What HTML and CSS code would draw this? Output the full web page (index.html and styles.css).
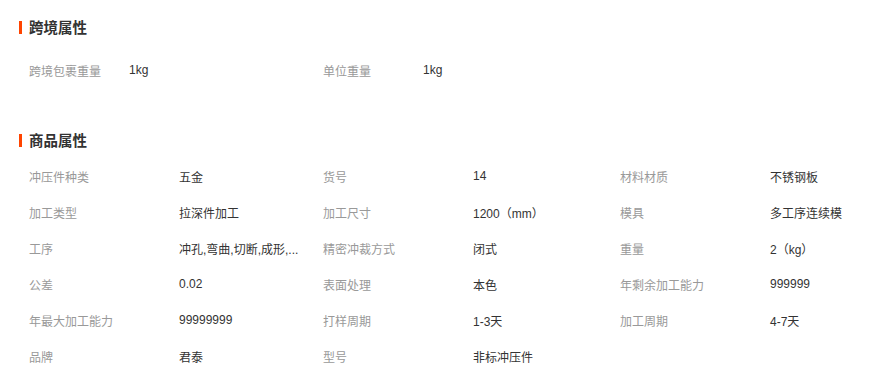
FILE: index.html
```html
<!DOCTYPE html>
<html lang="zh">
<head>
<meta charset="utf-8">
<link rel="stylesheet" href="styles.css">
</head>
<body>
<section class="sec sec-cross">
  <h2 class="title">跨境属性</h2>
  <div class="grid narrow">
    <div class="item"><span class="label">跨境包裹重量</span><span class="value">1kg</span></div>
    <div class="item"><span class="label">单位重量</span><span class="value">1kg</span></div>
  </div>
</section>
<section class="sec sec-goods">
  <h2 class="title">商品属性</h2>
  <div class="grid">
    <div class="item"><span class="label">冲压件种类</span><span class="value">五金</span></div>
    <div class="item"><span class="label">货号</span><span class="value">14</span></div>
    <div class="item"><span class="label">材料材质</span><span class="value">不锈钢板</span></div>
    <div class="item"><span class="label">加工类型</span><span class="value">拉深件加工</span></div>
    <div class="item"><span class="label">加工尺寸</span><span class="value">1200（mm）</span></div>
    <div class="item"><span class="label">模具</span><span class="value">多工序连续模</span></div>
    <div class="item"><span class="label">工序</span><span class="value" title="冲孔,弯曲,切断,成形,拉深">冲孔,弯曲,切断,成形,...</span></div>
    <div class="item"><span class="label">精密冲裁方式</span><span class="value">闭式</span></div>
    <div class="item"><span class="label">重量</span><span class="value">2（kg）</span></div>
    <div class="item"><span class="label">公差</span><span class="value">0.02</span></div>
    <div class="item"><span class="label">表面处理</span><span class="value">本色</span></div>
    <div class="item"><span class="label">年剩余加工能力</span><span class="value">999999</span></div>
    <div class="item"><span class="label">年最大加工能力</span><span class="value">99999999</span></div>
    <div class="item"><span class="label">打样周期</span><span class="value">1-3天</span></div>
    <div class="item"><span class="label">加工周期</span><span class="value">4-7天</span></div>
    <div class="item"><span class="label">品牌</span><span class="value">君泰</span></div>
    <div class="item"><span class="label">型号</span><span class="value">非标冲压件</span></div>
  </div>
</section>
</body>
</html>
```
FILE: styles.css
```css
html, body {
  margin: 0;
  padding: 0;
  background: #fff;
}
body {
  font-family: "Liberation Sans", "Noto Sans CJK SC", sans-serif;
  font-size: 12px;
  color: #333;
  width: 878px;
  overflow: hidden;
}
.sec {
  padding-left: 19px;
}
.sec-cross {
  padding-top: 17px;
}
.sec-goods {
  padding-top: 42px;
}
.title {
  margin: 0;
  display: flex;
  align-items: center;
  height: 20px;
  line-height: 20px;
  font-size: 14.5px;
  font-weight: bold;
  color: #333;
  font-family: "Noto Sans CJK SC", sans-serif;
}
.title::before {
  content: "";
  width: 3px;
  height: 13px;
  background: #ff4400;
  margin-right: 7px;
}
.grid {
  display: grid;
  grid-template-columns: 294px 297px 1fr;
  padding-left: 10px;
}
.sec-cross .grid {
  margin-top: 15px;
}
.sec-goods .grid {
  margin-top: 8px;
}
.item {
  display: flex;
  align-items: center;
  height: 36px;
}
.label {
  width: 150px;
  flex: none;
  color: #999;
  white-space: nowrap;
}
.narrow .label {
  width: 100px;
}
.value {
  color: #333;
  white-space: nowrap;
}
```
